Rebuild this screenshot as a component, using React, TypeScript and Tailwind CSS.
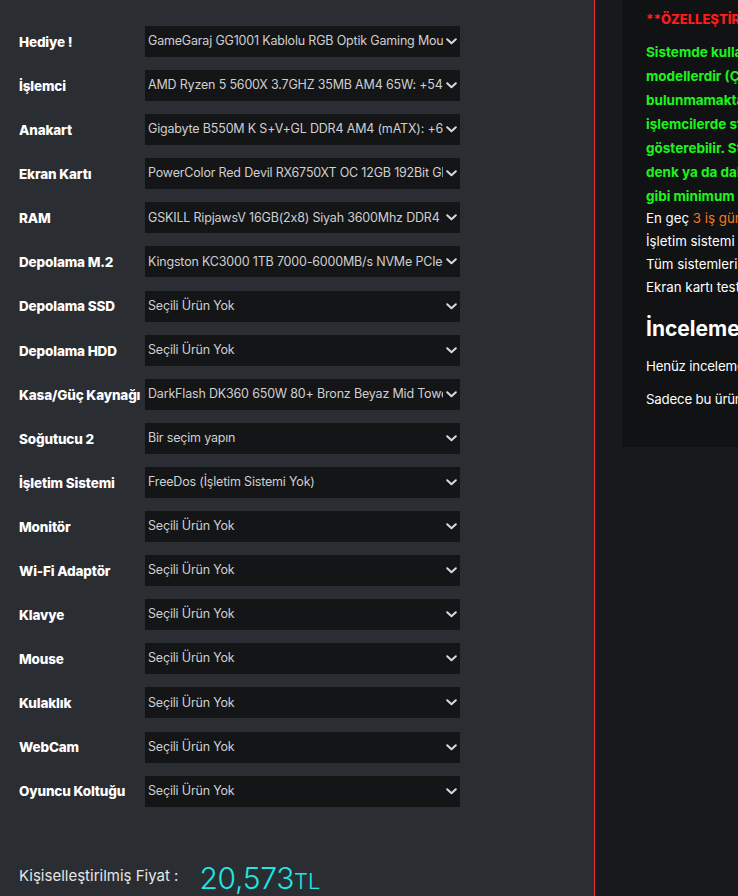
import React from "react";

const rows: [string, string][] = [
  ["Hediye !", "GameGaraj GG1001 Kablolu RGB Optik Gaming Mouse: +0 TL"],
  ["İşlemci", "AMD Ryzen 5 5600X 3.7GHZ 35MB AM4 65W:  +5480 TL"],
  ["Anakart", "Gigabyte B550M K S+V+GL DDR4 AM4 (mATX):  +6150 TL"],
  ["Ekran Kartı", "PowerColor Red Devil RX6750XT OC 12GB 192Bit GDDR6"],
  ["RAM", "GSKILL RipjawsV 16GB(2x8) Siyah 3600Mhz DDR4 CL18"],
  ["Depolama M.2", "Kingston KC3000 1TB 7000-6000MB/s NVMe PCIe M.2"],
  ["Depolama SSD", "Seçili Ürün Yok"],
  ["Depolama HDD", "Seçili Ürün Yok"],
  ["Kasa/Güç Kaynağı", "DarkFlash DK360 650W 80+ Bronz Beyaz Mid Tower Kasa"],
  ["Soğutucu 2", "Bir seçim yapın"],
  ["İşletim Sistemi", "FreeDos (İşletim Sistemi Yok)"],
  ["Monitör", "Seçili Ürün Yok"],
  ["Wi-Fi Adaptör", "Seçili Ürün Yok"],
  ["Klavye", "Seçili Ürün Yok"],
  ["Mouse", "Seçili Ürün Yok"],
  ["Kulaklık", "Seçili Ürün Yok"],
  ["WebCam", "Seçili Ürün Yok"],
  ["Oyuncu Koltuğu", "Seçili Ürün Yok"],
];

const greenLines = [
  "Sistemde kullanılan ürünler görseldeki ürünlerle aynı",
  "modellerdir (Çip seti ve marka farklılığı",
  "bulunmamaktadır). Ancak stok durumuna göre",
  "işlemcilerde stok ve tray versiyonları farklılık",
  "gösterebilir. Stok durumuna göre ürünler",
  "denk ya da daha üst modellerle değiştirilebilir",
  "gibi minimum performans garantisi verilmektedir.",
];

function Chevron() {
  return (
    <svg width="11" height="7" viewBox="0 0 11 7" className="shrink-0">
      <path d="M1.2 1.2 L5.5 5.3 L9.8 1.2" fill="none" stroke="#d9d9d9" strokeWidth="2" strokeLinecap="round" strokeLinejoin="round" />
    </svg>
  );
}

export default function App() {
  return (
    <div
      className="w-[738px] h-[896px] overflow-hidden flex bg-[#18191d]"
      style={{ fontFamily: "Inter, 'Noto Sans', 'Liberation Sans', sans-serif" }}
    >
      <div className="w-[594px] shrink-0 bg-[#2a2d32] flex flex-col pt-[26px] pl-[19px]">
        <div className="flex flex-col gap-[13.1px]">
          {rows.map(([label, value]) => (
            <div key={label} className="flex items-center h-[31px]">
              <div className="w-[126px] shrink-0 text-white text-[13.5px] font-extrabold tracking-[-0.15px] whitespace-nowrap pt-[1px]">
                {label}
              </div>
              <div className="w-[315px] h-[31px] bg-[#141517] flex items-center pl-[3px] pr-[3px]">
                <div className="flex-1 overflow-hidden whitespace-nowrap text-[12.5px] text-[#cfcfcf] tracking-[-0.18px]">
                  {value}
                </div>
                <div className="w-[14px] flex justify-end pl-[2px]">
                  <Chevron />
                </div>
              </div>
            </div>
          ))}
        </div>
        <div className="mt-[56px] flex items-end">
          <span className="text-[15px] text-[#e6e6e6] mb-[5px] whitespace-nowrap">Kişiselleştirilmiş Fiyat :</span>
          <span className="ml-[21px] text-[30px] font-light text-[#1ee8e6] leading-none tracking-[-0.3px]">20,573</span>
          <span className="text-[22px] font-light text-[#1ee8e6] leading-none mb-[1px]">TL</span>
        </div>
      </div>
      <div className="w-px shrink-0 bg-[#e53530]" />
      <div className="flex-1 pl-[27px]">
        <div className="w-[400px] h-[447px] bg-[#111213] pl-[24px] pt-[10px]">
          <div className="text-[13px] font-extrabold text-[#ff1c1c] whitespace-nowrap leading-[18px]">
            **ÖZELLEŞTİRME YAPILDIĞINDA FİYAT DEĞİŞİR**
          </div>
          <div className="mt-[12px] flex flex-col">
            {greenLines.map((l) => (
              <div key={l} className="text-[13.5px] font-bold text-[#1cf51c] whitespace-nowrap leading-[24px]">
                {l}
              </div>
            ))}
          </div>
          <div className="-mt-[1px] flex flex-col text-[13.3px] text-white leading-[23px]">
            <div className="whitespace-nowrap">
              En geç <span className="text-[#f47a1f]">3 iş günü</span> içinde kargoya verilir.
            </div>
            <div className="whitespace-nowrap">
              İşletim sistemi <span className="text-[#1df01d]">seçilmesi halinde</span> kurulum yapılır.
            </div>
            <div className="whitespace-nowrap">Tüm sistemlerin testleri yapılarak gönderilir.</div>
            <div className="whitespace-nowrap">Ekran kartı testleri yapılmaktadır.</div>
          </div>
          <div className="mt-[15px] text-[21px] font-bold text-white whitespace-nowrap leading-[30px]">
            İncelemeler
          </div>
          <div className="mt-[13px] text-[13.3px] text-white whitespace-nowrap leading-[18px] tracking-[-0.2px]">
            Henüz inceleme yapılmadı.
          </div>
          <div className="mt-[15px] text-[13.3px] text-white whitespace-nowrap leading-[18px] tracking-[-0.2px]">
            Sadece bu ürünü satın almış olan müşteriler inceleme yapabilir.
          </div>
        </div>
      </div>
    </div>
  );
}
